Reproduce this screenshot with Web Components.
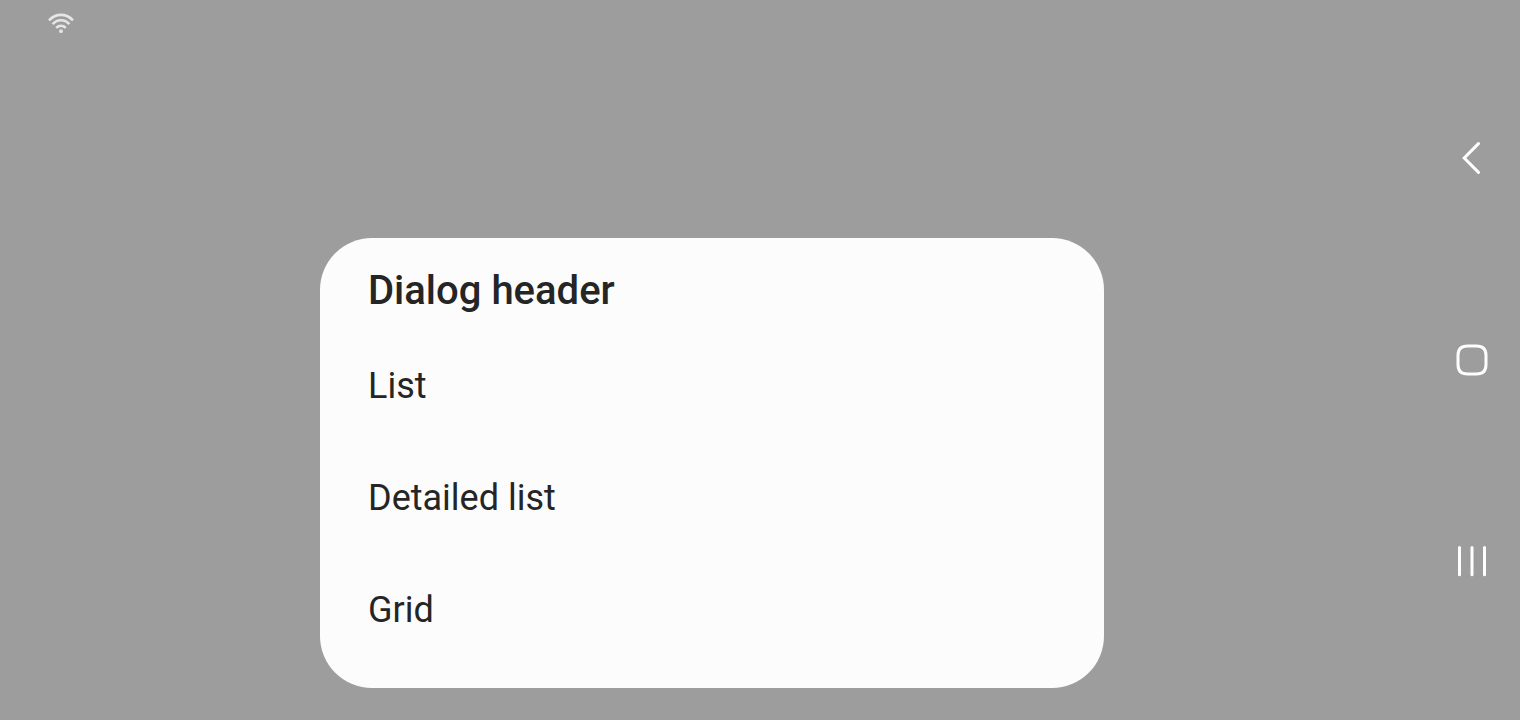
<!DOCTYPE html>
<html lang="en">
<head>
<meta charset="utf-8">
<meta name="viewport" content="width=device-width, initial-scale=1">
<title>Dialog</title>
<style>
html { background: #fff; }
body { margin: 0; font-family: Roboto, "Liberation Sans", sans-serif; color: #252525; }
</style>
</head>
<body>
<device-screen>
  <status-bar slot="status"></status-bar>
  <option-dialog heading="Dialog header">
    <dialog-option>List</dialog-option>
    <dialog-option>Detailed list</dialog-option>
    <dialog-option>Grid</dialog-option>
  </option-dialog>
  <navigation-bar slot="navigation"></navigation-bar>
</device-screen>
<script>
const define = (name, html, setup) => {
  const template = document.createElement('template');
  template.innerHTML = html;
  customElements.define(name, class extends HTMLElement {
    constructor() {
      super();
      this.attachShadow({ mode: 'open' }).append(template.content.cloneNode(true));
    }
    connectedCallback() { if (setup) setup(this); }
  });
};

define('device-screen', `
<style>
:host { display: grid; grid-template-columns: 1fr 96px; min-height: calc(100vh - 2px); background: #9d9d9d; }
.content { display: flex; flex-direction: column; }
main { flex: 1; display: flex; align-items: flex-end; justify-content: center; padding: 0 32px 32px; }
</style>
<div class="content">
  <slot name="status"></slot>
  <main><slot></slot></main>
</div>
<slot name="navigation"></slot>`);

define('status-bar', `
<style>
:host { display: flex; align-items: center; height: 48px; padding: 0 48px; color: #e6e6e6; }
svg { display: block; }
</style>
<svg width="26" height="24" viewBox="0 0 26 24" fill="none" stroke="currentColor" stroke-width="2.6" role="img" aria-label="Wi-Fi">
  <path d="M1 8.4C7.7 1 18.3 1 25 8.4M4.6 12.1C9.4 7 16.6 7 21.4 12.1M8.2 15.9C11 13.1 15 13.1 17.8 15.9"/>
  <circle cx="13" cy="19.2" r="1.9" fill="currentColor" stroke="none"/>
</svg>`);

define('option-dialog', `
<style>
:host { display: block; width: 784px; max-width: 100%; }
section { background: #fcfcfc; border-radius: 52px; padding: 29px 0 22px; }
h1 { margin: 0; padding: 0 48px 15px; font-size: 40px; line-height: 48px; font-weight: 500; }
</style>
<section role="dialog" aria-labelledby="title">
  <h1 id="title"></h1>
  <slot></slot>
</section>`, el => {
  el.shadowRoot.getElementById('title').textContent = el.getAttribute('heading');
});

define('dialog-option', `
<style>
:host { display: block; }
button { display: flex; align-items: center; width: 100%; min-height: 112px; padding: 0 48px; border: 0; background: none; color: inherit; font: inherit; font-size: 36px; line-height: 48px; text-align: left; cursor: pointer; }
</style>
<button type="button"><slot></slot></button>`);

define('navigation-bar', `
<style>
:host { display: block; color: #fff; }
nav { display: grid; grid-template-rows: repeat(3, 1fr); box-sizing: border-box; height: 100%; padding: 57px 0; }
button { display: grid; place-items: center; border: 0; padding: 0; background: none; color: inherit; cursor: pointer; }
svg { display: block; fill: none; stroke: currentColor; stroke-width: 3; }
</style>
<nav aria-label="System navigation">
  <button type="button" aria-label="Back">
    <svg width="40" height="40" viewBox="0 0 40 40"><path d="M26.5 5.6 12.2 20 26.5 34.4" stroke-linecap="round"/></svg>
  </button>
  <button type="button" aria-label="Home">
    <svg width="40" height="40" viewBox="0 0 40 40"><path d="M15.5 6H24.5C31 6 34 9 34 15.5V24.5C34 31 31 34 24.5 34H15.5C9 34 6 31 6 24.5V15.5C6 9 9 6 15.5 6Z"/></svg>
  </button>
  <button type="button" aria-label="Recent apps">
    <svg width="40" height="40" viewBox="0 0 40 40"><path d="M7.5 5.5V32.8M20 5.5V32.8M32.5 5.5V32.8" stroke-linecap="round"/></svg>
  </button>
</nav>`);
</script>
</body>
</html>
